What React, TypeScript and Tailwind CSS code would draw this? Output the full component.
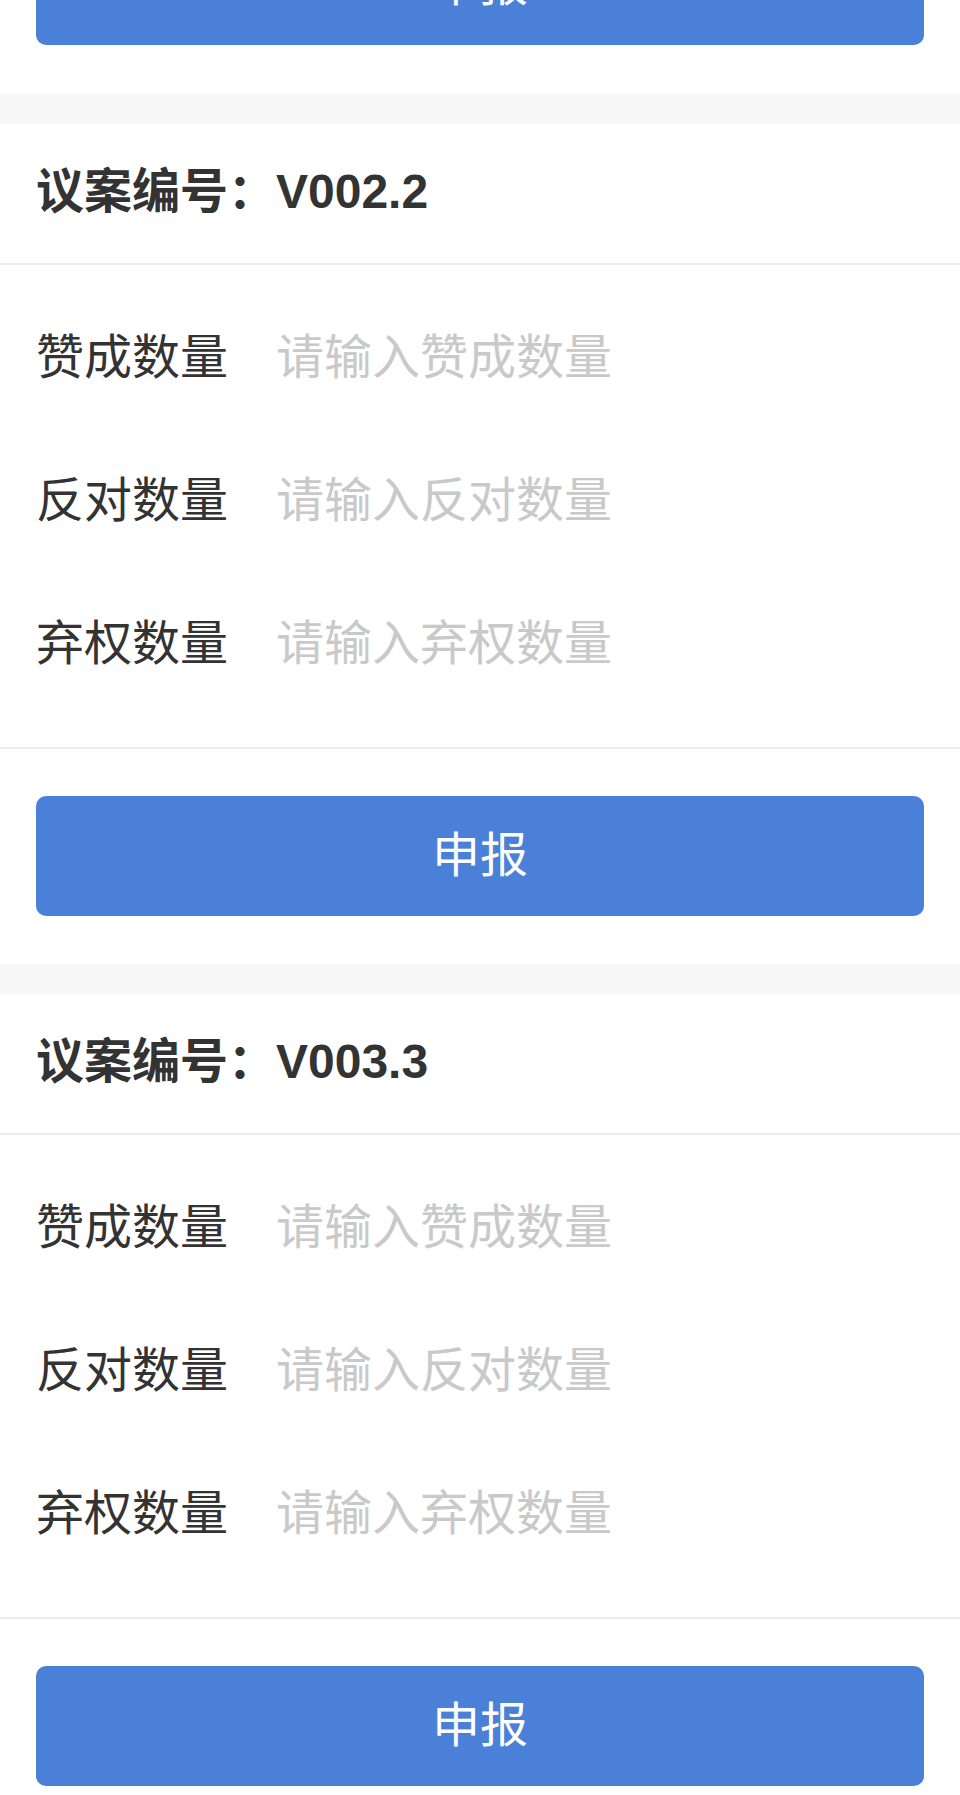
import React from "react";

const rows = [
  { label: "赞成数量", ph: "请输入赞成数量" },
  { label: "反对数量", ph: "请输入反对数量" },
  { label: "弃权数量", ph: "请输入弃权数量" },
];

function SubmitButton() {
  return (
    <button
      type="button"
      className="block h-[120px] w-full rounded-[10px] bg-[#4a80d8] text-[48px] leading-none text-white"
    >
      申报
    </button>
  );
}

function Card({ code }: { code: string }) {
  return (
    <div>
      <div className="h-[30px] bg-[#f7f7f7]" />
      <div className="flex h-[141px] items-center border-b-2 border-[#ededed] px-[36px] pb-[4px]">
        <span
          className="text-[48px] font-bold leading-none text-[#333333]"
          style={{ fontFamily: '"Liberation Sans", "Noto Sans CJK SC", sans-serif' }}
        >
          议案编号：{code}
        </span>
      </div>
      <div className="border-b-2 border-[#ededed] pb-[32px] pt-[21px]">
        {rows.map((r) => (
          <div key={r.label} className="flex h-[143px] items-center px-[36px]">
            <label className="w-[240px] shrink-0 text-[48px] leading-none text-[#333333]">{r.label}</label>
            <input
              className="min-w-0 flex-1 bg-transparent text-[48px] leading-none text-[#333333] outline-none placeholder:text-[#c9c9c9]"
              placeholder={r.ph}
            />
          </div>
        ))}
      </div>
      <div className="px-[36px] pb-[48px] pt-[47px]">
        <SubmitButton />
      </div>
    </div>
  );
}

export default function App() {
  return (
    <div
      className="h-[1795px] w-[960px] overflow-hidden bg-white"
      style={{ fontFamily: 'Roboto, "Noto Sans CJK SC", sans-serif' }}
    >
      <div className="h-[94px] overflow-hidden px-[36px]">
        <div className="-mt-[75px]">
          <SubmitButton />
        </div>
      </div>
      <Card code="V002.2" />
      <Card code="V003.3" />
    </div>
  );
}
